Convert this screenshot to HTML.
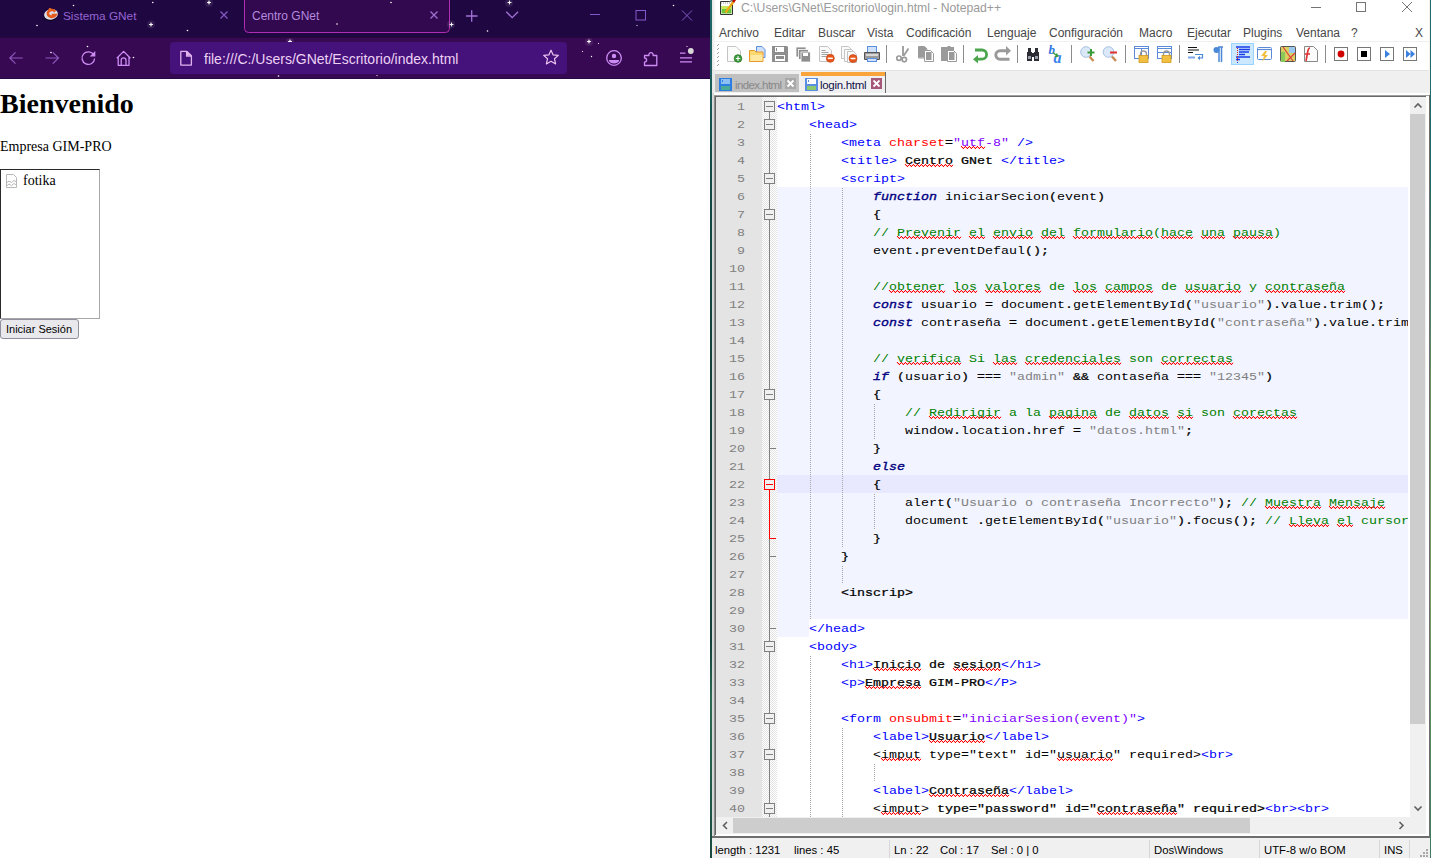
<!DOCTYPE html>
<html><head><meta charset="utf-8"><title>Screen</title>
<style>
*{margin:0;padding:0;box-sizing:border-box}
html,body{width:1431px;height:858px;overflow:hidden;background:#fff;position:relative;font-family:"Liberation Sans",sans-serif}
.ab{position:absolute}
/* firefox */
#ff{position:absolute;left:0;top:0;width:710px;height:858px;background:#fff;overflow:hidden}
#fftabs{position:absolute;left:0;top:0;width:710px;height:37px;background:#1f0741}
#fftool{position:absolute;left:0;top:37px;width:710px;height:42px;background:#380953;border-top:1px solid #2a063f}
.fft{position:absolute;font-size:12px;white-space:nowrap;line-height:14px}
/* notepad++ */
#npp{position:absolute;left:712px;top:0;width:719px;height:858px;background:#f0f0f0;overflow:hidden}
.menu{position:absolute;top:26px;font-size:12px;line-height:14px;color:#474747;white-space:nowrap}
.ln{position:absolute;left:777px;height:18px;font-family:"Liberation Mono",monospace;font-size:13.333px;line-height:18px;white-space:pre;color:#000;transform:scaleY(0.86);transform-origin:0 12.5px}
.lno{position:absolute;left:0;width:745px;text-align:right;height:18px;font-family:"Liberation Mono",monospace;font-size:13.333px;line-height:18px;color:#808080;transform:scaleY(0.88);transform-origin:0 12.5px}
.t{color:#0000ff}
.a{color:#ff0000}
.v{color:#8000ff}
.b{font-weight:normal;-webkit-text-stroke:0.28px #000}
.k{color:#000080;font-weight:normal;font-style:italic;-webkit-text-stroke:0.4px #000080}
.c{color:#008000}
.s{color:#808080}
.sb{position:absolute;top:843px;font-size:11.3px;line-height:14px;color:#000;white-space:nowrap}

</style></head><body>
<div id="ff">
 <div id="fftabs"></div>
 <div id="fftool"></div>
 <div class="ab" style="left:0;top:78px;width:710px;height:1px;background:#2a0642"></div>
 <svg class="ab" style="left:0;top:0" width="710" height="79" viewBox="0 0 710 79">
  <!-- selected tab -->
  <path d="M244.5,-2 V28.5 A4,4 0 0 0 248.5,32.5 H445.5 A4,4 0 0 0 449.5,28.5 V-2" fill="#32094e" stroke="#b02cb0" stroke-width="1"/>
  <!-- favicon -->
  <ellipse cx="50.5" cy="15.8" rx="6.8" ry="5" fill="#000" opacity=".55" transform="rotate(-15 50.5 15.8)"/>
  <ellipse cx="51" cy="14.4" rx="7" ry="5.3" fill="#dcdce6" transform="rotate(-12 51 14.4)"/>
  <path d="M55.2,11.6 A4,3.4 0 1 0 55.4,15 H51.6" fill="none" stroke="#e4581a" stroke-width="2.6"/>
  <circle cx="50" cy="9.5" r="1.4" fill="#e86a20"/>
  <!-- tab close 1 -->
  <path d="M220.5,11.5 l7,7 M227.5,11.5 l-7,7" stroke="#8458c0" stroke-width="1.3"/>
  <!-- tab close 2 -->
  <path d="M430.5,11.5 l7,7 M437.5,11.5 l-7,7" stroke="#a070d0" stroke-width="1.3"/>
  <!-- plus -->
  <path d="M466,16 h11.5 M471.7,10.3 v11.5" stroke="#a373d8" stroke-width="1.3"/>
  <!-- chevron -->
  <path d="M506.3,11.8 l5.9,5.9 l5.9,-5.9" fill="none" stroke="#a373d8" stroke-width="1.3"/>
  <!-- window controls -->
  <path d="M590,14.5 h10" stroke="#8458c8" stroke-width="1"/>
  <rect x="636" y="10.5" width="9.5" height="9.5" fill="none" stroke="#8458c8" stroke-width="1"/>
  <path d="M682,10.5 l10,10 M692,10.5 l-10,10" stroke="#8458c8" stroke-width="1"/>
  <!-- stars -->
  <g fill="#fff">
   <circle cx="73.5" cy="5.5" r=".8"/><circle cx="37" cy="25.5" r=".8"/><circle cx="152.8" cy="2.5" r=".8"/>
   <circle cx="151" cy="24.5" r="1"/><circle cx="187.5" cy="30.5" r=".8"/><circle cx="209" cy="2.5" r="1"/>
   <circle cx="337" cy="24" r=".8"/><circle cx="391" cy="2.5" r=".8"/><circle cx="451.5" cy="24.5" r="1"/>
   <circle cx="487.5" cy="31" r=".8"/><circle cx="509.5" cy="2.5" r="1"/><circle cx="673.5" cy="5.5" r=".8"/>
   <circle cx="637" cy="25.5" r=".6"/>
   <circle cx="87.5" cy="46.5" r=".8"/><circle cx="51" cy="52.5" r=".8"/><circle cx="133.5" cy="57.5" r=".8"/>
   <circle cx="202.5" cy="70.5" r="1"/><circle cx="290" cy="41.5" r="1"/><circle cx="278.5" cy="76" r=".8"/>
   <circle cx="282" cy="51.5" r=".6"/><circle cx="298" cy="42.5" r=".6"/><circle cx="312" cy="68.5" r=".8"/>
   <circle cx="589" cy="41.5" r="1"/><circle cx="598.5" cy="43.5" r=".6"/><circle cx="582.5" cy="51.5" r=".6"/>
   <circle cx="591.5" cy="56.5" r=".7"/><circle cx="687" cy="46.5" r=".6"/><circle cx="377" cy="75.5" r=".6"/>
  </g>
  <g fill="#ffffff" opacity=".08"><circle cx="151" cy="24.5" r="4"/><circle cx="209" cy="3" r="4"/><circle cx="451" cy="24.5" r="4"/><circle cx="509" cy="3" r="4"/><circle cx="290" cy="42" r="4"/><circle cx="589" cy="42" r="4"/></g>
  <path d="M149,24.5 h4 M151,22.5 v4" stroke="#fff" stroke-width=".9" fill="none"/><path d="M207,2.5 h4 M209,0.5 v4" stroke="#fff" stroke-width=".9" fill="none"/><path d="M288,41.5 h4 M290,39.5 v4" stroke="#fff" stroke-width=".9" fill="none"/><path d="M200.5,70.5 h4 M202.5,68.5 v4" stroke="#fff" stroke-width=".9" fill="none"/><path d="M449.5,24.5 h4 M451.5,22.5 v4" stroke="#fff" stroke-width=".9" fill="none"/><path d="M507.5,2.5 h4 M509.5,0.5 v4" stroke="#fff" stroke-width=".9" fill="none"/><path d="M587,41.5 h4 M589,39.5 v4" stroke="#fff" stroke-width=".9" fill="none"/>
  <!-- toolbar icons -->
  <path d="M9.8,58 h13 M15.5,52.3 L9.8,58 L15.5,63.7" fill="none" stroke="#8b58bd" stroke-width="1.2"/>
  <path d="M45.5,58 h13 M52.8,52.3 L58.5,58 L52.8,63.7" fill="none" stroke="#8b58bd" stroke-width="1.2"/>
  <path d="M93.8,55 A6.3,6.3 0 1 0 94.6,58.5" fill="none" stroke="#cc8cf4" stroke-width="1.3"/>
  <path d="M95.3,51 V56.6 H89.7 Z" fill="#cc8cf4"/>
  <path d="M116.8,58.2 L123.6,51.4 L130.4,58.2 M118.2,57 V65.3 H129 V57 M121.2,65.3 V60.2 A2.4,2.4 0 0 1 126,60.2 V65.3" fill="none" stroke="#cc8cf4" stroke-width="1.3" stroke-linejoin="round"/>
  <!-- url bar -->
  <rect x="170" y="42" width="397" height="32" rx="4" fill="#45117a"/>
  <path d="M180.8,51.4 h6.2 l4.4,4.4 v9.3 h-10.6 z M186.6,51.6 v4.6 h4.6" fill="none" stroke="#e2b2ee" stroke-width="1.3" stroke-linejoin="round"/>
  <path d="M187,51.5 l4.3,4.3 h-4.3 z" fill="#e2b2ee"/>
  <path d="M551,50.2 L553.2,54.9 L558.3,55.4 L554.5,58.8 L555.6,63.9 L551,61.3 L546.4,63.9 L547.5,58.8 L543.7,55.4 L548.8,54.9 Z" fill="none" stroke="#eec6f2" stroke-width="1.2" stroke-linejoin="round"/>
  <circle cx="614" cy="58" r="7.3" fill="none" stroke="#cc8cf4" stroke-width="1.3"/>
  <circle cx="614" cy="56" r="2.2" fill="#cc8cf4"/>
  <path d="M608.8,60 h10.4 a5.2,3.6 0 0 1 -10.4,0 z" fill="#cc8cf4"/>
  <path d="M644.5,65.5 V62.2 a2.1,2.1 0 0 0 0,-4.2 V55.5 H648.9 a2.2,2.2 0 1 1 4.2,0 H656.8 V65.5 Z" fill="none" stroke="#cc8cf4" stroke-width="1.3" stroke-linejoin="round"/>
  <path d="M680,53.2 h5.5 M680,57.8 h12 M680,61.8 h12" stroke="#cc8cf4" stroke-width="1.3"/>
  <circle cx="690.8" cy="51" r="2.9" fill="#d8d8d8"/>
 </svg>
 <div class="fft" style="left:63px;top:9px;color:#9566d2;font-size:11.8px">Sistema GNet</div>
 <div class="fft" style="left:252px;top:9px;color:#b48adf">Centro GNet</div>
 <div class="fft" style="left:204px;top:51px;color:#ecd2f4;font-size:14px;line-height:16px">file:///C:/Users/GNet/Escritorio/index.html</div>
 <!-- page -->
 <div class="ab" style="left:0;top:92px;font-family:'Liberation Serif',serif;font-weight:bold;font-size:28px;line-height:24px;color:#000;white-space:nowrap">Bienvenido</div>
 <div class="ab" style="left:0;top:140px;font-family:'Liberation Serif',serif;font-size:14px;line-height:14px;color:#000;white-space:nowrap">Empresa GIM-PRO</div>
 <div class="ab" style="left:0;top:169px;width:100px;height:150px;border:1px solid;border-color:#2a2a2a #a8a8a8 #a8a8a8 #2a2a2a"></div>
 <svg class="ab" style="left:0;top:160px" width="30" height="40" viewBox="0 160 30 40">
  <path d="M6.5,174.5 h7 l3,3 v10 h-10 z" fill="#fff" stroke="#b8b8b8"/>
  <path d="M6.5,183 l2.5,-2 l2.5,1.5 l2.5,-2 l2.5,1.5 M6.5,186 l2.5,-2 l2.5,1.5 l2.5,-2 l2.5,1.5" fill="none" stroke="#b8b8b8"/>
 </svg>
 <div class="ab" style="left:23px;top:174px;font-family:'Liberation Serif',serif;font-size:14px;line-height:14px;color:#000">fotika</div>
 <div class="ab" style="left:0;top:319px;width:79px;height:20px;border:1px solid #8f8f9d;border-radius:3px;background:#e9e9ed"></div>
 <div class="ab" style="left:6px;top:323px;font-size:11px;line-height:12px;color:#000;white-space:nowrap">Iniciar Sesión</div>
</div>
<div class="ab" style="left:710px;top:0;width:2px;height:858px;background:linear-gradient(to bottom,#206a6a 0,#1d6262 60px,#154a46 160px,#133f3c 400px,#133f3c 640px,#2d6a52 700px,#1a4a40 858px)"></div>

<div id="npp"></div>
<!-- title + menu + toolbar white area -->
<div class="ab" style="left:712px;top:0;width:717px;height:70px;background:#fff"></div>
<div class="ab" style="left:712px;top:0;width:4px;height:858px;background:linear-gradient(to right,#e6e6e6,#fff0)"></div>
<div class="ab" style="left:712px;top:41px;width:717px;height:1px;background:#f0f0f0"></div>
<div class="ab" style="left:712px;top:70px;width:717px;height:1px;background:#e3e3e3"></div>
<svg class="ab" style="left:712px;top:0" width="719" height="72" viewBox="712 0 719 72">
 <!-- app icon -->
 <path d="M720.5,1.5 h9 l3,-1 v14 h-12 z" fill="#fff" stroke="#333" stroke-width="1"/>
 <path d="M721,3 h11" stroke="#999" stroke-dasharray="1 1"/>
 <rect x="721.5" y="6" width="10" height="7.5" fill="#6cc83a"/>
 <rect x="721.5" y="6" width="10" height="3" fill="#c8e858"/>
 <path d="M725.5,12.5 L734,1" stroke="#f0a818" stroke-width="2.2"/>
 <path d="M733.2,2 L735,-0.5" stroke="#b00" stroke-width="2.2"/>
 <!-- window controls -->
 <path d="M1311,7.5 h10" stroke="#747474" stroke-width="1"/>
 <rect x="1356.5" y="2.5" width="9" height="9" fill="none" stroke="#747474" stroke-width="1"/>
 <path d="M1402,2 l10,10 M1412,2 l-10,10" stroke="#747474" stroke-width="1"/>
 <!-- grip -->
 <g fill="#a0a0a0"><rect x="717" y="45" width="1" height="1"/><rect x="717" y="49" width="1" height="1"/><rect x="717" y="53" width="1" height="1"/><rect x="717" y="57" width="1" height="1"/><rect x="717" y="61" width="1" height="1"/><rect x="717" y="65" width="1" height="1"/>
 <rect x="718" y="44" width="1" height="1"/><rect x="718" y="48" width="1" height="1"/><rect x="718" y="52" width="1" height="1"/><rect x="718" y="56" width="1" height="1"/><rect x="718" y="60" width="1" height="1"/><rect x="718" y="64" width="1" height="1"/></g>
 <!-- separators -->
 <g fill="#8c8c8c"><rect x="886" y="45" width="1" height="18"/><rect x="963" y="45" width="1" height="18"/><rect x="1017" y="45" width="1" height="18"/><rect x="1071" y="45" width="1" height="18"/><rect x="1125" y="45" width="1" height="18"/><rect x="1179" y="45" width="1" height="18"/><rect x="1325" y="45" width="1" height="18"/></g>
 <!-- 1 new -->
 <path d="M727.5,46.5 h8.5 l4.5,4.5 v10.5 h-13 z" fill="#fbfbfb" stroke="#c4c4c4"/>
 <circle cx="738" cy="58.5" r="3.8" fill="#3c9c3c" stroke="#2a7a2a" stroke-width=".8"/>
 <path d="M738,56.3 v4.4 M735.8,58.5 h4.4" stroke="#fff" stroke-width="1.2"/>
 <!-- 2 open -->
 <path d="M756.5,46.5 h5.5 l3,3 v8 h-8.5 z" fill="#cfe0fa" stroke="#5b8fde"/>
 <path d="M749.5,50.5 h5 l1.5,1.5 h7 v9.5 h-13.5 z" fill="#ffd870" stroke="#e8962e"/>
 <rect x="750.5" y="55" width="12" height="6" fill="#ffe9a0"/>
 <!-- 3 save -->
 <path d="M772,46 h15 l1,1 v15 h-16 z" fill="#8e8e8e"/>
 <rect x="775" y="47" width="9" height="5" fill="#fff"/><rect x="776" y="48" width="1" height="3" fill="#8e8e8e"/>
 <rect x="775" y="55" width="10" height="6" fill="#fff"/><rect x="776" y="56" width="8" height="3" fill="#8e8e8e"/>
 <!-- 4 save all -->
 <rect x="796" y="47" width="10" height="10" fill="#8e8e8e" stroke="#fff" stroke-width=".8"/>
 <rect x="798.5" y="49.5" width="10" height="10" fill="#8e8e8e" stroke="#fff" stroke-width=".8"/>
 <rect x="801" y="52" width="9.5" height="10" fill="#8e8e8e" stroke="#fff" stroke-width=".8"/>
 <rect x="803" y="53" width="5" height="3" fill="#fff"/>
 <!-- 5 close -->
 <path d="M819.5,46.5 h8 l4,4 v11 h-12 z" fill="#fafafa" stroke="#c4c4c4"/>
 <path d="M821.5,50.5 h4 M821.5,52.5 h7 M821.5,54.5 h7 M821.5,56.5 h5" stroke="#8a8a8a" stroke-width=".8"/>
 <circle cx="830.3" cy="58.3" r="4" fill="#e8561a" stroke="#c04010" stroke-width=".6"/>
 <path d="M827.8,58.3 h5" stroke="#fff" stroke-width="1.5"/>
 <!-- 6 close all -->
 <path d="M841.5,46.5 h7 l3,3 v9 h-10 z" fill="#fafafa" stroke="#c4c4c4"/>
 <path d="M844.5,49.5 h7 l3,3 v9 h-10 z" fill="#fafafa" stroke="#c4c4c4"/>
 <path d="M847.5,51.5 h6 l3,3 v8 h-9 z" fill="#fafafa" stroke="#c4c4c4"/>
 <circle cx="853" cy="58.5" r="4" fill="#e8561a" stroke="#c04010" stroke-width=".6"/>
 <path d="M850.5,58.5 h5" stroke="#fff" stroke-width="1.5"/>
 <!-- 7 print -->
 <rect x="867.5" y="46.5" width="9" height="6" fill="#cfe0fa" stroke="#5b8fde"/>
 <path d="M864.5,52.5 h15 v7 h-15 z" fill="#9a9a9a" stroke="#555"/>
 <rect x="866" y="54" width="12" height="2" fill="#d8d8d8"/>
 <rect x="867.5" y="58.5" width="9" height="3" fill="#cfe0fa" stroke="#5b8fde"/>
 <!-- 8 cut -->
 <path d="M903,46 V56 M908.5,48.5 L903.5,56" stroke="#9a9a9a" stroke-width="1.8"/>
 <circle cx="899" cy="58.2" r="2.2" fill="none" stroke="#9a9a9a" stroke-width="1.7"/>
 <circle cx="904.3" cy="59.6" r="2.2" fill="none" stroke="#9a9a9a" stroke-width="1.7"/>
 <!-- 9 copy -->
 <path d="M918.5,46.5 h6 l2.5,2.5 v9 h-8.5 z" fill="#9a9a9a" stroke="#fff" stroke-width="1"/>
 <path d="M918.5,46.5 h6 l2.5,2.5 v9 h-8.5 z" fill="none" stroke="#9a9a9a" stroke-width="1" transform="translate(0,0)"/>
 <rect x="920" y="48" width="5" height="8.5" fill="#9a9a9a"/>
 <path d="M924.5,50.5 h6 l3,3 v8 h-9 z" fill="#fff" stroke="#9a9a9a"/>
 <rect x="926" y="52" width="5.5" height="8" fill="#9a9a9a"/>
 <!-- 10 paste -->
 <path d="M941,47 h6 l1,-1 h2 l1,1 h3 v14 h-13 z" fill="#9a9a9a"/>
 <path d="M947.5,50.5 h6 l3,3 v8 h-9 z" fill="#fff" stroke="#9a9a9a"/>
 <rect x="949" y="52" width="5.5" height="8" fill="#9a9a9a"/>
 <!-- 11 undo -->
 <path d="M975,50 h7 a4.6,4.6 0 0 1 0,9.2 h-4" fill="none" stroke="#4da64d" stroke-width="2.8"/>
 <path d="M973,59.2 l5,-4.3 v8.6 z" fill="#4da64d"/>
 <!-- 12 redo -->
 <path d="M1006,50.8 h-6 a4.2,4.2 0 0 0 0,8.4 h9.5" fill="none" stroke="#9a9a9a" stroke-width="3"/>
 <path d="M1011,50.8 l-5,-4.8 v9.6 z" fill="#9a9a9a"/>
 <!-- 13 find -->
 <path d="M1027,52 h5 v9 h-5 z M1034,52 h5 v9 h-5 z M1028,48 h3 v4 h-3 z M1035,48 h3 v4 h-3 z M1031,53 h4 v4 h-4 z" fill="#2c2c34"/>
 <rect x="1028" y="56" width="3" height="3" fill="#9aa0a8"/><rect x="1035" y="56" width="3" height="3" fill="#9aa0a8"/>
 <!-- 14 replace -->
 <text x="1048.5" y="54" font-family="Liberation Serif" font-style="italic" font-weight="bold" font-size="13" fill="#2f78e0">b</text>
 <text x="1053.5" y="62.5" font-family="Liberation Serif" font-style="italic" font-weight="bold" font-size="16" fill="#3a84e8">a</text>
 <path d="M1053,52.5 l4,3.5 M1056.5,53.5 l1.2,2.8 l-3,0.3" fill="none" stroke="#3a9a3a" stroke-width="1.3"/>
 <!-- 15 zoom in -->
 <circle cx="1086" cy="52" r="5.3" fill="#dbe8f8" stroke="#a8c0e0"/>
 <path d="M1089.5,56.5 l4,4.5" stroke="#c88a50" stroke-width="2.4"/>
 <path d="M1091,49 v7 M1087.5,52.5 h7" stroke="#3a9a3a" stroke-width="2"/>
 <!-- 16 zoom out -->
 <circle cx="1108.5" cy="52" r="5.3" fill="#dbe8f8" stroke="#a8c0e0"/>
 <path d="M1112,56.5 l4,4.5" stroke="#c88a50" stroke-width="2.4"/>
 <path d="M1110,52.5 h7" stroke="#e03030" stroke-width="2"/>
 <!-- 17 sync v -->
 <rect x="1134.5" y="46.5" width="14" height="12" fill="#fff" stroke="#5a8ad8"/>
 <path d="M1134.5,48.5 h14 M1141.5,48.5 v10" stroke="#5a8ad8"/>
 <path d="M1140.5,56 v-2 a3,3 0 0 1 6,0 v2" fill="none" stroke="#999" stroke-width="1.4"/>
 <rect x="1139" y="55.5" width="9" height="7" fill="#f2c040" stroke="#d09a20" stroke-width=".8"/>
 <!-- 18 sync h -->
 <rect x="1157.5" y="46.5" width="14" height="12" fill="#fff" stroke="#5a8ad8"/>
 <path d="M1157.5,48.5 h14 M1157.5,52.5 h14" stroke="#5a8ad8"/>
 <path d="M1163.5,56 v-2 a3,3 0 0 1 6,0 v2" fill="none" stroke="#999" stroke-width="1.4"/>
 <rect x="1162" y="55.5" width="9" height="7" fill="#f2c040" stroke="#d09a20" stroke-width=".8"/>
 <!-- 19 wrap -->
 <path d="M1188,47.5 h9 M1188,50 h11 M1188,52.5 h5" stroke="#111" stroke-width="1"/>
 <path d="M1195,54.5 h7.5 v3.5 h-4" fill="none" stroke="#4a88d8" stroke-width="1.2"/>
 <path d="M1197.5,58 l2.5,-2.3 v4.6 z" fill="#4a88d8"/>
 <rect x="1188" y="56.5" width="7" height="2" fill="#7aa8e8"/>
 <!-- 20 pilcrow -->
 <path d="M1218,47 h5 M1219,47 v15 M1221.5,47 v15" stroke="#4a88d8" stroke-width="1.5"/>
 <circle cx="1216.5" cy="50" r="3" fill="#4a88d8"/>
 <!-- 21 indent guide (active) -->
 <rect x="1231.5" y="43.5" width="22" height="21" fill="#cce8ff" stroke="#99d1ff"/>
 <path d="M1236,47 h14 M1239,49.5 h11 M1239,52 h10 M1239,54.5 h6 M1236,57 h14 M1236,59.5 h4" stroke="#1a3ce8" stroke-width="1.3"/>
 <path d="M1237.5,48 v13" stroke="#e02020" stroke-dasharray="1 1"/>
 <rect x="1237" y="62" width="1" height="1" fill="#1a3ce8"/>
 <!-- 22 lang -->
 <rect x="1257.5" y="47.5" width="14" height="12" rx="1" fill="#fff" stroke="#5a8ad8"/>
 <path d="M1257.5,49.5 h14" stroke="#5a8ad8" stroke-width="1.2"/>
 <path d="M1265,51 l-4,5 h3 l-2,6 l6,-7 h-3 l2,-4 z" fill="#f0c040"/>
 <!-- 23 doc map -->
 <rect x="1280.5" y="46.5" width="15" height="15" rx="1" fill="#d8d060" stroke="#555"/>
 <path d="M1281,52 h4 v10 h-4 z" fill="#8ac858"/><path d="M1289,47 h6 v6 h-6 z" fill="#9ac8f0"/>
 <path d="M1283,47 l10,14 M1295,53 l-8,8" stroke="#e04040" stroke-width="1.2"/>
 <!-- 24 function list -->
 <path d="M1304.5,46.5 h9 l4,4 v11 h-13 z" fill="#fbfbfb" stroke="#888"/>
 <path d="M1310,48 c-2,0 -2,2 -2.5,5 l-1.5,8 M1305,54 h5" fill="none" stroke="#e03030" stroke-width="1.6"/>
 <!-- 25 record -->
 <rect x="1334.5" y="47.5" width="13" height="13" fill="#fff" stroke="#777"/>
 <circle cx="1341" cy="54" r="3.4" fill="#d00000"/>
 <!-- 26 stop -->
 <rect x="1357.5" y="47.5" width="13" height="13" fill="#fff" stroke="#777"/>
 <rect x="1361" y="51" width="6" height="6" fill="#000"/>
 <!-- 27 play -->
 <rect x="1380.5" y="47.5" width="13" height="13" fill="#fff" stroke="#777"/>
 <path d="M1385,50 l5,4 l-5,4 z" fill="#3a80e0"/>
 <!-- 28 play multi -->
 <rect x="1403.5" y="47.5" width="13" height="13" fill="#fff" stroke="#777"/>
 <path d="M1406,50 l4.5,4 l-4.5,4 z M1410.5,50 l4.5,4 l-4.5,4 z" fill="#3a80e0"/>
</svg>
<div class="ab" style="left:741px;top:1px;font-size:12.2px;line-height:14px;color:#9a9a9a;white-space:nowrap">C:\Users\GNet\Escritorio\login.html - Notepad++</div>
<div class="menu" style="left:719px">Archivo</div>
<div class="menu" style="left:774px">Editar</div>
<div class="menu" style="left:818px">Buscar</div>
<div class="menu" style="left:867px">Vista</div>
<div class="menu" style="left:906px">Codificación</div>
<div class="menu" style="left:987px">Lenguaje</div>
<div class="menu" style="left:1049px">Configuración</div>
<div class="menu" style="left:1139px">Macro</div>
<div class="menu" style="left:1187px">Ejecutar</div>
<div class="menu" style="left:1243px">Plugins</div>
<div class="menu" style="left:1296px">Ventana</div>
<div class="menu" style="left:1351px">?</div>
<div class="menu" style="left:1415px">X</div>
<!-- tabs -->
<div class="ab" style="left:715px;top:74px;width:84px;height:18px;background:#c0c0c0"></div>
<div class="ab" style="left:801px;top:72px;width:85px;height:22px;background:#f0f0f0;border-right:1px solid #6a6a6a"></div>
<div class="ab" style="left:801px;top:72px;width:84px;height:4px;background:#faa53c"></div>
<svg class="ab" style="left:712px;top:70px" width="200" height="26" viewBox="712 70 200 26">
 <rect x="719" y="78" width="13" height="13" fill="#2e7de0"/><rect x="721" y="79" width="9" height="5" fill="#8cc0f4"/><rect x="721" y="86" width="9" height="4" fill="#4aaa98"/><rect x="722" y="80" width="1" height="2" fill="#2e7de0"/>
 <rect x="785" y="78" width="11" height="11" fill="#a8a8a8"/><path d="M787.5,80.5 l6,6 M793.5,80.5 l-6,6" stroke="#fff" stroke-width="1.8"/>
 <rect x="805" y="78" width="13" height="13" fill="#5a8ee0"/><rect x="807" y="79" width="9" height="5" fill="#fff"/><rect x="807" y="86" width="9" height="4" fill="#8cc870"/><rect x="808" y="80" width="1" height="2" fill="#5a8ee0"/>
 <rect x="871" y="78" width="11" height="11" fill="#a55878"/><path d="M873.5,80.5 l6,6 M879.5,80.5 l-6,6" stroke="#fff" stroke-width="1.8"/>
</svg>
<div class="ab" style="left:735px;top:78px;font-size:11.5px;line-height:14px;color:#888;white-space:nowrap;letter-spacing:-0.6px">index.html</div>
<div class="ab" style="left:820px;top:78px;font-size:11.5px;line-height:14px;color:#10104a;white-space:nowrap;letter-spacing:-0.3px">login.html</div>
<!-- editor frame -->
<div class="ab" style="left:713px;top:93px;width:716px;height:744px;background:#fff"></div>
<div class="ab" style="left:712px;top:93px;width:1px;height:745px;background:#dadada"></div>
<div class="ab" style="left:713px;top:93px;width:1px;height:743px;background:#d2d2d2"></div>
<div class="ab" style="left:714px;top:95px;width:1px;height:741px;background:#8f8f8f"></div>
<div class="ab" style="left:714px;top:95px;width:715px;height:1px;background:#a0a0a0"></div>
<div class="ab" style="left:715px;top:96px;width:1px;height:739px;background:#636363"></div>
<div class="ab" style="left:715px;top:96px;width:712px;height:1px;background:#696969"></div>
<div class="ab" style="left:712px;top:836px;width:718px;height:2px;background:#6e6e6e"></div>
<div class="ab" style="left:1429px;top:95px;width:1px;height:743px;background:#6e6e6e"></div>
<div class="ab" style="left:716px;top:97px;width:46px;height:720px;background:#e4e4e4"></div>
<svg class="ab" style="left:762px;top:97px" width="15" height="720" viewBox="762 97 15 720">
 <defs><pattern id="chk" x="0" y="0" width="2" height="2" patternUnits="userSpaceOnUse"><rect width="2" height="2" fill="#fff"/><rect width="1" height="1" fill="#e4e4e4"/><rect x="1" y="1" width="1" height="1" fill="#e4e4e4"/></pattern></defs>
 <rect x="762" y="97" width="15" height="720" fill="url(#chk)"/>
 <rect x="769" y="112" width="1" height="705" fill="#808080"/>
<rect x="769" y="490" width="1" height="49" fill="#ff0000"/>
<rect x="770" y="538" width="6" height="1" fill="#ff0000"/>
<rect x="770" y="448" width="6" height="1" fill="#808080"/>
<rect x="770" y="556" width="6" height="1" fill="#808080"/>
<rect x="770" y="628" width="6" height="1" fill="#808080"/>
<rect x="764.5" y="101.5" width="10" height="10" fill="#f0f0f0" stroke="#808080"/>
<rect x="766" y="106" width="7" height="1" fill="#808080"/>
<rect x="764.5" y="119.5" width="10" height="10" fill="#f0f0f0" stroke="#808080"/>
<rect x="766" y="124" width="7" height="1" fill="#808080"/>
<rect x="764.5" y="173.5" width="10" height="10" fill="#f0f0f0" stroke="#808080"/>
<rect x="766" y="178" width="7" height="1" fill="#808080"/>
<rect x="764.5" y="209.5" width="10" height="10" fill="#f0f0f0" stroke="#808080"/>
<rect x="766" y="214" width="7" height="1" fill="#808080"/>
<rect x="764.5" y="389.5" width="10" height="10" fill="#f0f0f0" stroke="#808080"/>
<rect x="766" y="394" width="7" height="1" fill="#808080"/>
<rect x="764.5" y="479.5" width="10" height="10" fill="#f0f0f0" stroke="#ff0000"/>
<rect x="766" y="484" width="7" height="1" fill="#ff0000"/>
<rect x="764.5" y="641.5" width="10" height="10" fill="#f0f0f0" stroke="#808080"/>
<rect x="766" y="646" width="7" height="1" fill="#808080"/>
<rect x="764.5" y="713.5" width="10" height="10" fill="#f0f0f0" stroke="#808080"/>
<rect x="766" y="718" width="7" height="1" fill="#808080"/>
<rect x="764.5" y="749.5" width="10" height="10" fill="#f0f0f0" stroke="#808080"/>
<rect x="766" y="754" width="7" height="1" fill="#808080"/>
<rect x="764.5" y="803.5" width="10" height="10" fill="#f0f0f0" stroke="#808080"/>
<rect x="766" y="808" width="7" height="1" fill="#808080"/>
</svg>
<div class="ab" style="left:777px;top:97px;width:631px;height:720px;overflow:hidden">
 <div class="ab" style="left:0;top:90px;width:633px;height:432px;background:#f2f4ff"></div>
 <div class="ab" style="left:0;top:378px;width:633px;height:18px;background:#e8e8ff"></div>
 <div class="ab" style="left:0;top:522px;width:32px;height:18px;background:#f2f4ff"></div>
 <svg class="ab" style="left:0;top:0" width="633" height="720" viewBox="777 97 633 720">
  <defs><pattern id="dots" x="0" y="0" width="1" height="2" patternUnits="userSpaceOnUse"><rect width="1" height="1" fill="#a8a8a8"/></pattern></defs>
<rect x="810" y="133" width="1" height="486" fill="url(#dots)"/>
<rect x="810" y="655" width="1" height="162" fill="url(#dots)"/>
<rect x="842" y="187" width="1" height="360" fill="url(#dots)"/>
<rect x="842" y="565" width="1" height="18" fill="url(#dots)"/>
<rect x="842" y="727" width="1" height="90" fill="url(#dots)"/>
<rect x="874" y="403" width="1" height="36" fill="url(#dots)"/>
<rect x="874" y="493" width="1" height="36" fill="url(#dots)"/>
<rect x="874" y="763" width="1" height="18" fill="url(#dots)"/>
 </svg>
 <div class="ab" style="left:-777px;top:-97px;width:1431px;height:858px">
<div class="ln" style="top:98px"><span class="t">&lt;html&gt;</span></div>
<div class="ln" style="top:116px">    <span class="t">&lt;head&gt;</span></div>
<div class="ln" style="top:134px">        <span class="t">&lt;meta </span><span class="a">charset</span><span class="b">=</span><span class="v">"utf-8"</span><span class="t"> /&gt;</span></div>
<div class="ln" style="top:152px">        <span class="t">&lt;title&gt;</span><span class="b"> Centro GNet </span><span class="t">&lt;/title&gt;</span></div>
<div class="ln" style="top:170px">        <span class="t">&lt;script&gt;</span></div>
<div class="ln" style="top:188px">            <span class="k">function</span> iniciarSecion<span class="b">(</span>event<span class="b">)</span></div>
<div class="ln" style="top:206px">            <span class="b">{</span></div>
<div class="ln" style="top:224px">            <span class="c">// Prevenir el envio del formulario(hace una pausa)</span></div>
<div class="ln" style="top:242px">            event<span class="b">.</span>preventDefaul<span class="b">();</span></div>
<div class="ln" style="top:260px"></div>
<div class="ln" style="top:278px">            <span class="c">//obtener los valores de los campos de usuario y contraseña</span></div>
<div class="ln" style="top:296px">            <span class="k">const</span> usuario <span class="b">=</span> document<span class="b">.</span>getElementById<span class="b">(</span><span class="s">"usuario"</span><span class="b">).</span>value<span class="b">.</span>trim<span class="b">();</span></div>
<div class="ln" style="top:314px">            <span class="k">const</span> contraseña <span class="b">=</span> document<span class="b">.</span>getElementById<span class="b">(</span><span class="s">"contraseña"</span><span class="b">).</span>value<span class="b">.</span>trim<span class="b">();</span></div>
<div class="ln" style="top:332px"></div>
<div class="ln" style="top:350px">            <span class="c">// verifica Si las credenciales son correctas</span></div>
<div class="ln" style="top:368px">            <span class="k">if</span> <span class="b">(</span>usuario<span class="b">)</span> <span class="b">===</span> <span class="s">"admin"</span> <span class="b">&amp;&amp;</span> contaseña <span class="b">===</span> <span class="s">"12345"</span><span class="b">)</span></div>
<div class="ln" style="top:386px">            <span class="b">{</span></div>
<div class="ln" style="top:404px">                <span class="c">// Redirigir a la pagina de datos si son corectas</span></div>
<div class="ln" style="top:422px">                window<span class="b">.</span>location<span class="b">.</span>href <span class="b">=</span> <span class="s">"datos.html"</span><span class="b">;</span></div>
<div class="ln" style="top:440px">            <span class="b">}</span></div>
<div class="ln" style="top:458px">            <span class="k">else</span></div>
<div class="ln" style="top:476px">            <span class="b">{</span></div>
<div class="ln" style="top:494px">                alert<span class="b">(</span><span class="s">"Usuario o contraseña Incorrecto"</span><span class="b">);</span> <span class="c">// Muestra Mensaje</span></div>
<div class="ln" style="top:512px">                document <span class="b">.</span>getElementById<span class="b">(</span><span class="s">"usuario"</span><span class="b">).</span>focus<span class="b">();</span> <span class="c">// Lleva el cursor al campo</span></div>
<div class="ln" style="top:530px">            <span class="b">}</span></div>
<div class="ln" style="top:548px">        <span class="b">}</span></div>
<div class="ln" style="top:566px"></div>
<div class="ln" style="top:584px">        <span class="b">&lt;inscrip&gt;</span></div>
<div class="ln" style="top:602px"></div>
<div class="ln" style="top:620px">    <span class="t">&lt;/head&gt;</span></div>
<div class="ln" style="top:638px">    <span class="t">&lt;body&gt;</span></div>
<div class="ln" style="top:656px">        <span class="t">&lt;h1&gt;</span><span class="b">Inicio de sesion</span><span class="t">&lt;/h1&gt;</span></div>
<div class="ln" style="top:674px">        <span class="t">&lt;p&gt;</span><span class="b">Empresa GIM-PRO</span><span class="t">&lt;/P&gt;</span></div>
<div class="ln" style="top:692px"></div>
<div class="ln" style="top:710px">        <span class="t">&lt;form </span><span class="a">onsubmit</span><span class="b">=</span><span class="v">"iniciarSesion(event)"</span><span class="t">&gt;</span></div>
<div class="ln" style="top:728px">            <span class="t">&lt;label&gt;</span><span class="b">Usuario</span><span class="t">&lt;/label&gt;</span></div>
<div class="ln" style="top:746px">            &lt;imput type="text" id="usuario" required&gt;<span class="t">&lt;br&gt;</span></div>
<div class="ln" style="top:764px"></div>
<div class="ln" style="top:782px">            <span class="t">&lt;label&gt;</span><span class="b">Contraseña</span><span class="t">&lt;/label&gt;</span></div>
<div class="ln" style="top:800px">            &lt;imput&gt;<span class="b"> type="password" id="contraseña" required&gt;</span><span class="t">&lt;br&gt;&lt;br&gt;</span></div>
 </div>
 <svg class="ab" style="left:0;top:0" width="633" height="720" viewBox="777 97 633 720">
  <defs><pattern id="zz" x="777" y="2" width="4" height="3" patternUnits="userSpaceOnUse"><rect x="0" y="0" width="1" height="1" fill="#f00"/><rect x="1" y="1" width="1" height="1" fill="#f00"/><rect x="2" y="2" width="1" height="1" fill="#f00"/><rect x="3" y="1" width="1" height="1" fill="#f00"/></pattern></defs>
<polyline points="961,146.5 963,148.5 965,146.5 967,148.5 969,146.5 971,148.5 973,146.5 975,148.5 977,146.5 979,148.5 981,146.5 983,148.5 985,146.5" fill="none" stroke="#f00" stroke-width="1" opacity=".45"/>
<rect x="961" y="146" width="24" height="3" fill="url(#zz)"/>
<polyline points="905,164.5 907,166.5 909,164.5 911,166.5 913,164.5 915,166.5 917,164.5 919,166.5 921,164.5 923,166.5 925,164.5 927,166.5 929,164.5 931,166.5 933,164.5 935,166.5 937,164.5 939,166.5 941,164.5 943,166.5 945,164.5 947,166.5 949,164.5 951,166.5 953,164.5" fill="none" stroke="#f00" stroke-width="1" opacity=".45"/>
<rect x="905" y="164" width="48" height="3" fill="url(#zz)"/>
<polyline points="897,236.5 899,238.5 901,236.5 903,238.5 905,236.5 907,238.5 909,236.5 911,238.5 913,236.5 915,238.5 917,236.5 919,238.5 921,236.5 923,238.5 925,236.5 927,238.5 929,236.5 931,238.5 933,236.5 935,238.5 937,236.5 939,238.5 941,236.5 943,238.5 945,236.5 947,238.5 949,236.5 951,238.5 953,236.5 955,238.5 957,236.5 959,238.5 961,236.5" fill="none" stroke="#f00" stroke-width="1" opacity=".45"/>
<rect x="897" y="236" width="64" height="3" fill="url(#zz)"/>
<polyline points="969,236.5 971,238.5 973,236.5 975,238.5 977,236.5 979,238.5 981,236.5 983,238.5 985,236.5" fill="none" stroke="#f00" stroke-width="1" opacity=".45"/>
<rect x="969" y="236" width="16" height="3" fill="url(#zz)"/>
<polyline points="993,236.5 995,238.5 997,236.5 999,238.5 1001,236.5 1003,238.5 1005,236.5 1007,238.5 1009,236.5 1011,238.5 1013,236.5 1015,238.5 1017,236.5 1019,238.5 1021,236.5 1023,238.5 1025,236.5 1027,238.5 1029,236.5 1031,238.5 1033,236.5" fill="none" stroke="#f00" stroke-width="1" opacity=".45"/>
<rect x="993" y="236" width="40" height="3" fill="url(#zz)"/>
<polyline points="1041,236.5 1043,238.5 1045,236.5 1047,238.5 1049,236.5 1051,238.5 1053,236.5 1055,238.5 1057,236.5 1059,238.5 1061,236.5 1063,238.5 1065,236.5" fill="none" stroke="#f00" stroke-width="1" opacity=".45"/>
<rect x="1041" y="236" width="24" height="3" fill="url(#zz)"/>
<polyline points="1073,236.5 1075,238.5 1077,236.5 1079,238.5 1081,236.5 1083,238.5 1085,236.5 1087,238.5 1089,236.5 1091,238.5 1093,236.5 1095,238.5 1097,236.5 1099,238.5 1101,236.5 1103,238.5 1105,236.5 1107,238.5 1109,236.5 1111,238.5 1113,236.5 1115,238.5 1117,236.5 1119,238.5 1121,236.5 1123,238.5 1125,236.5 1127,238.5 1129,236.5 1131,238.5 1133,236.5 1135,238.5 1137,236.5 1139,238.5 1141,236.5 1143,238.5 1145,236.5 1147,238.5 1149,236.5 1151,238.5 1153,236.5" fill="none" stroke="#f00" stroke-width="1" opacity=".45"/>
<rect x="1073" y="236" width="80" height="3" fill="url(#zz)"/>
<polyline points="1161,236.5 1163,238.5 1165,236.5 1167,238.5 1169,236.5 1171,238.5 1173,236.5 1175,238.5 1177,236.5 1179,238.5 1181,236.5 1183,238.5 1185,236.5 1187,238.5 1189,236.5 1191,238.5 1193,236.5" fill="none" stroke="#f00" stroke-width="1" opacity=".45"/>
<rect x="1161" y="236" width="32" height="3" fill="url(#zz)"/>
<polyline points="1201,236.5 1203,238.5 1205,236.5 1207,238.5 1209,236.5 1211,238.5 1213,236.5 1215,238.5 1217,236.5 1219,238.5 1221,236.5 1223,238.5 1225,236.5" fill="none" stroke="#f00" stroke-width="1" opacity=".45"/>
<rect x="1201" y="236" width="24" height="3" fill="url(#zz)"/>
<polyline points="1233,236.5 1235,238.5 1237,236.5 1239,238.5 1241,236.5 1243,238.5 1245,236.5 1247,238.5 1249,236.5 1251,238.5 1253,236.5 1255,238.5 1257,236.5 1259,238.5 1261,236.5 1263,238.5 1265,236.5 1267,238.5 1269,236.5 1271,238.5 1273,236.5" fill="none" stroke="#f00" stroke-width="1" opacity=".45"/>
<rect x="1233" y="236" width="40" height="3" fill="url(#zz)"/>
<polyline points="889,290.5 891,292.5 893,290.5 895,292.5 897,290.5 899,292.5 901,290.5 903,292.5 905,290.5 907,292.5 909,290.5 911,292.5 913,290.5 915,292.5 917,290.5 919,292.5 921,290.5 923,292.5 925,290.5 927,292.5 929,290.5 931,292.5 933,290.5 935,292.5 937,290.5 939,292.5 941,290.5 943,292.5 945,290.5" fill="none" stroke="#f00" stroke-width="1" opacity=".45"/>
<rect x="889" y="290" width="56" height="3" fill="url(#zz)"/>
<polyline points="953,290.5 955,292.5 957,290.5 959,292.5 961,290.5 963,292.5 965,290.5 967,292.5 969,290.5 971,292.5 973,290.5 975,292.5 977,290.5" fill="none" stroke="#f00" stroke-width="1" opacity=".45"/>
<rect x="953" y="290" width="24" height="3" fill="url(#zz)"/>
<polyline points="985,290.5 987,292.5 989,290.5 991,292.5 993,290.5 995,292.5 997,290.5 999,292.5 1001,290.5 1003,292.5 1005,290.5 1007,292.5 1009,290.5 1011,292.5 1013,290.5 1015,292.5 1017,290.5 1019,292.5 1021,290.5 1023,292.5 1025,290.5 1027,292.5 1029,290.5 1031,292.5 1033,290.5 1035,292.5 1037,290.5 1039,292.5 1041,290.5" fill="none" stroke="#f00" stroke-width="1" opacity=".45"/>
<rect x="985" y="290" width="56" height="3" fill="url(#zz)"/>
<polyline points="1073,290.5 1075,292.5 1077,290.5 1079,292.5 1081,290.5 1083,292.5 1085,290.5 1087,292.5 1089,290.5 1091,292.5 1093,290.5 1095,292.5 1097,290.5" fill="none" stroke="#f00" stroke-width="1" opacity=".45"/>
<rect x="1073" y="290" width="24" height="3" fill="url(#zz)"/>
<polyline points="1105,290.5 1107,292.5 1109,290.5 1111,292.5 1113,290.5 1115,292.5 1117,290.5 1119,292.5 1121,290.5 1123,292.5 1125,290.5 1127,292.5 1129,290.5 1131,292.5 1133,290.5 1135,292.5 1137,290.5 1139,292.5 1141,290.5 1143,292.5 1145,290.5 1147,292.5 1149,290.5 1151,292.5 1153,290.5" fill="none" stroke="#f00" stroke-width="1" opacity=".45"/>
<rect x="1105" y="290" width="48" height="3" fill="url(#zz)"/>
<polyline points="1185,290.5 1187,292.5 1189,290.5 1191,292.5 1193,290.5 1195,292.5 1197,290.5 1199,292.5 1201,290.5 1203,292.5 1205,290.5 1207,292.5 1209,290.5 1211,292.5 1213,290.5 1215,292.5 1217,290.5 1219,292.5 1221,290.5 1223,292.5 1225,290.5 1227,292.5 1229,290.5 1231,292.5 1233,290.5 1235,292.5 1237,290.5 1239,292.5 1241,290.5" fill="none" stroke="#f00" stroke-width="1" opacity=".45"/>
<rect x="1185" y="290" width="56" height="3" fill="url(#zz)"/>
<polyline points="1265,290.5 1267,292.5 1269,290.5 1271,292.5 1273,290.5 1275,292.5 1277,290.5 1279,292.5 1281,290.5 1283,292.5 1285,290.5 1287,292.5 1289,290.5 1291,292.5 1293,290.5 1295,292.5 1297,290.5 1299,292.5 1301,290.5 1303,292.5 1305,290.5 1307,292.5 1309,290.5 1311,292.5 1313,290.5 1315,292.5 1317,290.5 1319,292.5 1321,290.5 1323,292.5 1325,290.5 1327,292.5 1329,290.5 1331,292.5 1333,290.5 1335,292.5 1337,290.5 1339,292.5 1341,290.5 1343,292.5 1345,290.5" fill="none" stroke="#f00" stroke-width="1" opacity=".45"/>
<rect x="1265" y="290" width="80" height="3" fill="url(#zz)"/>
<polyline points="897,362.5 899,364.5 901,362.5 903,364.5 905,362.5 907,364.5 909,362.5 911,364.5 913,362.5 915,364.5 917,362.5 919,364.5 921,362.5 923,364.5 925,362.5 927,364.5 929,362.5 931,364.5 933,362.5 935,364.5 937,362.5 939,364.5 941,362.5 943,364.5 945,362.5 947,364.5 949,362.5 951,364.5 953,362.5 955,364.5 957,362.5 959,364.5 961,362.5" fill="none" stroke="#f00" stroke-width="1" opacity=".45"/>
<rect x="897" y="362" width="64" height="3" fill="url(#zz)"/>
<polyline points="993,362.5 995,364.5 997,362.5 999,364.5 1001,362.5 1003,364.5 1005,362.5 1007,364.5 1009,362.5 1011,364.5 1013,362.5 1015,364.5 1017,362.5" fill="none" stroke="#f00" stroke-width="1" opacity=".45"/>
<rect x="993" y="362" width="24" height="3" fill="url(#zz)"/>
<polyline points="1025,362.5 1027,364.5 1029,362.5 1031,364.5 1033,362.5 1035,364.5 1037,362.5 1039,364.5 1041,362.5 1043,364.5 1045,362.5 1047,364.5 1049,362.5 1051,364.5 1053,362.5 1055,364.5 1057,362.5 1059,364.5 1061,362.5 1063,364.5 1065,362.5 1067,364.5 1069,362.5 1071,364.5 1073,362.5 1075,364.5 1077,362.5 1079,364.5 1081,362.5 1083,364.5 1085,362.5 1087,364.5 1089,362.5 1091,364.5 1093,362.5 1095,364.5 1097,362.5 1099,364.5 1101,362.5 1103,364.5 1105,362.5 1107,364.5 1109,362.5 1111,364.5 1113,362.5 1115,364.5 1117,362.5 1119,364.5 1121,362.5" fill="none" stroke="#f00" stroke-width="1" opacity=".45"/>
<rect x="1025" y="362" width="96" height="3" fill="url(#zz)"/>
<polyline points="1161,362.5 1163,364.5 1165,362.5 1167,364.5 1169,362.5 1171,364.5 1173,362.5 1175,364.5 1177,362.5 1179,364.5 1181,362.5 1183,364.5 1185,362.5 1187,364.5 1189,362.5 1191,364.5 1193,362.5 1195,364.5 1197,362.5 1199,364.5 1201,362.5 1203,364.5 1205,362.5 1207,364.5 1209,362.5 1211,364.5 1213,362.5 1215,364.5 1217,362.5 1219,364.5 1221,362.5 1223,364.5 1225,362.5 1227,364.5 1229,362.5 1231,364.5 1233,362.5" fill="none" stroke="#f00" stroke-width="1" opacity=".45"/>
<rect x="1161" y="362" width="72" height="3" fill="url(#zz)"/>
<polyline points="929,416.5 931,418.5 933,416.5 935,418.5 937,416.5 939,418.5 941,416.5 943,418.5 945,416.5 947,418.5 949,416.5 951,418.5 953,416.5 955,418.5 957,416.5 959,418.5 961,416.5 963,418.5 965,416.5 967,418.5 969,416.5 971,418.5 973,416.5 975,418.5 977,416.5 979,418.5 981,416.5 983,418.5 985,416.5 987,418.5 989,416.5 991,418.5 993,416.5 995,418.5 997,416.5 999,418.5 1001,416.5" fill="none" stroke="#f00" stroke-width="1" opacity=".45"/>
<rect x="929" y="416" width="72" height="3" fill="url(#zz)"/>
<polyline points="1049,416.5 1051,418.5 1053,416.5 1055,418.5 1057,416.5 1059,418.5 1061,416.5 1063,418.5 1065,416.5 1067,418.5 1069,416.5 1071,418.5 1073,416.5 1075,418.5 1077,416.5 1079,418.5 1081,416.5 1083,418.5 1085,416.5 1087,418.5 1089,416.5 1091,418.5 1093,416.5 1095,418.5 1097,416.5" fill="none" stroke="#f00" stroke-width="1" opacity=".45"/>
<rect x="1049" y="416" width="48" height="3" fill="url(#zz)"/>
<polyline points="1129,416.5 1131,418.5 1133,416.5 1135,418.5 1137,416.5 1139,418.5 1141,416.5 1143,418.5 1145,416.5 1147,418.5 1149,416.5 1151,418.5 1153,416.5 1155,418.5 1157,416.5 1159,418.5 1161,416.5 1163,418.5 1165,416.5 1167,418.5 1169,416.5" fill="none" stroke="#f00" stroke-width="1" opacity=".45"/>
<rect x="1129" y="416" width="40" height="3" fill="url(#zz)"/>
<polyline points="1177,416.5 1179,418.5 1181,416.5 1183,418.5 1185,416.5 1187,418.5 1189,416.5 1191,418.5 1193,416.5" fill="none" stroke="#f00" stroke-width="1" opacity=".45"/>
<rect x="1177" y="416" width="16" height="3" fill="url(#zz)"/>
<polyline points="1233,416.5 1235,418.5 1237,416.5 1239,418.5 1241,416.5 1243,418.5 1245,416.5 1247,418.5 1249,416.5 1251,418.5 1253,416.5 1255,418.5 1257,416.5 1259,418.5 1261,416.5 1263,418.5 1265,416.5 1267,418.5 1269,416.5 1271,418.5 1273,416.5 1275,418.5 1277,416.5 1279,418.5 1281,416.5 1283,418.5 1285,416.5 1287,418.5 1289,416.5 1291,418.5 1293,416.5 1295,418.5 1297,416.5" fill="none" stroke="#f00" stroke-width="1" opacity=".45"/>
<rect x="1233" y="416" width="64" height="3" fill="url(#zz)"/>
<polyline points="1265,506.5 1267,508.5 1269,506.5 1271,508.5 1273,506.5 1275,508.5 1277,506.5 1279,508.5 1281,506.5 1283,508.5 1285,506.5 1287,508.5 1289,506.5 1291,508.5 1293,506.5 1295,508.5 1297,506.5 1299,508.5 1301,506.5 1303,508.5 1305,506.5 1307,508.5 1309,506.5 1311,508.5 1313,506.5 1315,508.5 1317,506.5 1319,508.5 1321,506.5" fill="none" stroke="#f00" stroke-width="1" opacity=".45"/>
<rect x="1265" y="506" width="56" height="3" fill="url(#zz)"/>
<polyline points="1329,506.5 1331,508.5 1333,506.5 1335,508.5 1337,506.5 1339,508.5 1341,506.5 1343,508.5 1345,506.5 1347,508.5 1349,506.5 1351,508.5 1353,506.5 1355,508.5 1357,506.5 1359,508.5 1361,506.5 1363,508.5 1365,506.5 1367,508.5 1369,506.5 1371,508.5 1373,506.5 1375,508.5 1377,506.5 1379,508.5 1381,506.5 1383,508.5 1385,506.5" fill="none" stroke="#f00" stroke-width="1" opacity=".45"/>
<rect x="1329" y="506" width="56" height="3" fill="url(#zz)"/>
<polyline points="1289,524.5 1291,526.5 1293,524.5 1295,526.5 1297,524.5 1299,526.5 1301,524.5 1303,526.5 1305,524.5 1307,526.5 1309,524.5 1311,526.5 1313,524.5 1315,526.5 1317,524.5 1319,526.5 1321,524.5 1323,526.5 1325,524.5 1327,526.5 1329,524.5" fill="none" stroke="#f00" stroke-width="1" opacity=".45"/>
<rect x="1289" y="524" width="40" height="3" fill="url(#zz)"/>
<polyline points="1337,524.5 1339,526.5 1341,524.5 1343,526.5 1345,524.5 1347,526.5 1349,524.5 1351,526.5 1353,524.5" fill="none" stroke="#f00" stroke-width="1" opacity=".45"/>
<rect x="1337" y="524" width="16" height="3" fill="url(#zz)"/>
<polyline points="873,668.5 875,670.5 877,668.5 879,670.5 881,668.5 883,670.5 885,668.5 887,670.5 889,668.5 891,670.5 893,668.5 895,670.5 897,668.5 899,670.5 901,668.5 903,670.5 905,668.5 907,670.5 909,668.5 911,670.5 913,668.5 915,670.5 917,668.5 919,670.5 921,668.5" fill="none" stroke="#f00" stroke-width="1" opacity=".45"/>
<rect x="873" y="668" width="48" height="3" fill="url(#zz)"/>
<polyline points="953,668.5 955,670.5 957,668.5 959,670.5 961,668.5 963,670.5 965,668.5 967,670.5 969,668.5 971,670.5 973,668.5 975,670.5 977,668.5 979,670.5 981,668.5 983,670.5 985,668.5 987,670.5 989,668.5 991,670.5 993,668.5 995,670.5 997,668.5 999,670.5 1001,668.5" fill="none" stroke="#f00" stroke-width="1" opacity=".45"/>
<rect x="953" y="668" width="48" height="3" fill="url(#zz)"/>
<polyline points="865,686.5 867,688.5 869,686.5 871,688.5 873,686.5 875,688.5 877,686.5 879,688.5 881,686.5 883,688.5 885,686.5 887,688.5 889,686.5 891,688.5 893,686.5 895,688.5 897,686.5 899,688.5 901,686.5 903,688.5 905,686.5 907,688.5 909,686.5 911,688.5 913,686.5 915,688.5 917,686.5 919,688.5 921,686.5" fill="none" stroke="#f00" stroke-width="1" opacity=".45"/>
<rect x="865" y="686" width="56" height="3" fill="url(#zz)"/>
<polyline points="929,740.5 931,742.5 933,740.5 935,742.5 937,740.5 939,742.5 941,740.5 943,742.5 945,740.5 947,742.5 949,740.5 951,742.5 953,740.5 955,742.5 957,740.5 959,742.5 961,740.5 963,742.5 965,740.5 967,742.5 969,740.5 971,742.5 973,740.5 975,742.5 977,740.5 979,742.5 981,740.5 983,742.5 985,740.5" fill="none" stroke="#f00" stroke-width="1" opacity=".45"/>
<rect x="929" y="740" width="56" height="3" fill="url(#zz)"/>
<polyline points="881,758.5 883,760.5 885,758.5 887,760.5 889,758.5 891,760.5 893,758.5 895,760.5 897,758.5 899,760.5 901,758.5 903,760.5 905,758.5 907,760.5 909,758.5 911,760.5 913,758.5 915,760.5 917,758.5 919,760.5 921,758.5" fill="none" stroke="#f00" stroke-width="1" opacity=".45"/>
<rect x="881" y="758" width="40" height="3" fill="url(#zz)"/>
<polyline points="1057,758.5 1059,760.5 1061,758.5 1063,760.5 1065,758.5 1067,760.5 1069,758.5 1071,760.5 1073,758.5 1075,760.5 1077,758.5 1079,760.5 1081,758.5 1083,760.5 1085,758.5 1087,760.5 1089,758.5 1091,760.5 1093,758.5 1095,760.5 1097,758.5 1099,760.5 1101,758.5 1103,760.5 1105,758.5 1107,760.5 1109,758.5 1111,760.5 1113,758.5" fill="none" stroke="#f00" stroke-width="1" opacity=".45"/>
<rect x="1057" y="758" width="56" height="3" fill="url(#zz)"/>
<polyline points="929,794.5 931,796.5 933,794.5 935,796.5 937,794.5 939,796.5 941,794.5 943,796.5 945,794.5 947,796.5 949,794.5 951,796.5 953,794.5 955,796.5 957,794.5 959,796.5 961,794.5 963,796.5 965,794.5 967,796.5 969,794.5 971,796.5 973,794.5 975,796.5 977,794.5 979,796.5 981,794.5 983,796.5 985,794.5 987,796.5 989,794.5 991,796.5 993,794.5 995,796.5 997,794.5 999,796.5 1001,794.5 1003,796.5 1005,794.5 1007,796.5 1009,794.5" fill="none" stroke="#f00" stroke-width="1" opacity=".45"/>
<rect x="929" y="794" width="80" height="3" fill="url(#zz)"/>
<polyline points="881,812.5 883,814.5 885,812.5 887,814.5 889,812.5 891,814.5 893,812.5 895,814.5 897,812.5 899,814.5 901,812.5 903,814.5 905,812.5 907,814.5 909,812.5 911,814.5 913,812.5 915,814.5 917,812.5 919,814.5 921,812.5" fill="none" stroke="#f00" stroke-width="1" opacity=".45"/>
<rect x="881" y="812" width="40" height="3" fill="url(#zz)"/>
<polyline points="1097,812.5 1099,814.5 1101,812.5 1103,814.5 1105,812.5 1107,814.5 1109,812.5 1111,814.5 1113,812.5 1115,814.5 1117,812.5 1119,814.5 1121,812.5 1123,814.5 1125,812.5 1127,814.5 1129,812.5 1131,814.5 1133,812.5 1135,814.5 1137,812.5 1139,814.5 1141,812.5 1143,814.5 1145,812.5 1147,814.5 1149,812.5 1151,814.5 1153,812.5 1155,814.5 1157,812.5 1159,814.5 1161,812.5 1163,814.5 1165,812.5 1167,814.5 1169,812.5 1171,814.5 1173,812.5 1175,814.5 1177,812.5" fill="none" stroke="#f00" stroke-width="1" opacity=".45"/>
<rect x="1097" y="812" width="80" height="3" fill="url(#zz)"/>
 </svg>
</div>
<div class="ab" style="left:0;top:0;width:0;height:0">
<div class="lno" style="top:98px">1</div>
<div class="lno" style="top:116px">2</div>
<div class="lno" style="top:134px">3</div>
<div class="lno" style="top:152px">4</div>
<div class="lno" style="top:170px">5</div>
<div class="lno" style="top:188px">6</div>
<div class="lno" style="top:206px">7</div>
<div class="lno" style="top:224px">8</div>
<div class="lno" style="top:242px">9</div>
<div class="lno" style="top:260px">10</div>
<div class="lno" style="top:278px">11</div>
<div class="lno" style="top:296px">12</div>
<div class="lno" style="top:314px">13</div>
<div class="lno" style="top:332px">14</div>
<div class="lno" style="top:350px">15</div>
<div class="lno" style="top:368px">16</div>
<div class="lno" style="top:386px">17</div>
<div class="lno" style="top:404px">18</div>
<div class="lno" style="top:422px">19</div>
<div class="lno" style="top:440px">20</div>
<div class="lno" style="top:458px">21</div>
<div class="lno" style="top:476px">22</div>
<div class="lno" style="top:494px">23</div>
<div class="lno" style="top:512px">24</div>
<div class="lno" style="top:530px">25</div>
<div class="lno" style="top:548px">26</div>
<div class="lno" style="top:566px">27</div>
<div class="lno" style="top:584px">28</div>
<div class="lno" style="top:602px">29</div>
<div class="lno" style="top:620px">30</div>
<div class="lno" style="top:638px">31</div>
<div class="lno" style="top:656px">32</div>
<div class="lno" style="top:674px">33</div>
<div class="lno" style="top:692px">34</div>
<div class="lno" style="top:710px">35</div>
<div class="lno" style="top:728px">36</div>
<div class="lno" style="top:746px">37</div>
<div class="lno" style="top:764px">38</div>
<div class="lno" style="top:782px">39</div>
<div class="lno" style="top:800px">40</div>
</div>
<!-- scrollbars -->
<svg class="ab" style="left:712px;top:96px" width="719" height="740" viewBox="712 96 719 740">
 <rect x="1410" y="97" width="16" height="721" fill="#f0f0f0"/>
 <rect x="1410" y="114" width="15" height="610" fill="#cdcdcd"/>
 <path d="M1414.5,107.5 l3.5,-3.5 l3.5,3.5" fill="none" stroke="#606060" stroke-width="1.6"/>
 <path d="M1414.5,806.5 l3.5,3.5 l3.5,-3.5" fill="none" stroke="#606060" stroke-width="1.6"/>
 <rect x="716" y="817" width="710" height="17" fill="#f0f0f0"/><rect x="716" y="834" width="712" height="2" fill="#fff"/><rect x="1426" y="96" width="3" height="740" fill="#fff"/>
 <rect x="733" y="818" width="517" height="15" fill="#cdcdcd"/>
 <path d="M727,822 l-3.5,3.5 l3.5,3.5" fill="none" stroke="#606060" stroke-width="1.6"/>
 <path d="M1399.5,822 l3.5,3.5 l-3.5,3.5" fill="none" stroke="#606060" stroke-width="1.6"/>
</svg>
<!-- status -->
<div class="ab" style="left:712px;top:838px;width:718px;height:20px;background:#f0f0f0"></div>
<div class="ab" style="left:889px;top:840px;width:1px;height:18px;background:#d7d7d7"></div>
<div class="ab" style="left:1149px;top:840px;width:1px;height:18px;background:#d7d7d7"></div>
<div class="ab" style="left:1259px;top:840px;width:1px;height:18px;background:#d7d7d7"></div>
<div class="ab" style="left:1379px;top:840px;width:1px;height:18px;background:#d7d7d7"></div>
<div class="ab" style="left:1409px;top:840px;width:1px;height:18px;background:#d7d7d7"></div>
<svg class="ab" style="left:1418px;top:846px" width="12" height="12" viewBox="1418 846 12 12"><g fill="#a8a8a8"><rect x="1426" y="849" width="2" height="2"/><rect x="1423" y="852" width="2" height="2"/><rect x="1426" y="852" width="2" height="2"/><rect x="1420" y="855" width="2" height="2"/><rect x="1423" y="855" width="2" height="2"/><rect x="1426" y="855" width="2" height="2"/></g></svg>
<div class="sb" style="left:715px">length : 1231</div>
<div class="sb" style="left:794px">lines : 45</div>
<div class="sb" style="left:894px">Ln : 22</div>
<div class="sb" style="left:940px">Col : 17</div>
<div class="sb" style="left:991px">Sel : 0 | 0</div>
<div class="sb" style="left:1154px">Dos\Windows</div>
<div class="sb" style="left:1264px">UTF-8 w/o BOM</div>
<div class="sb" style="left:1384px">INS</div>
<div class="ab" style="left:1430px;top:0;width:1px;height:858px;background:linear-gradient(to bottom,#236a6a 0,#236a6a 180px,#6a8c60 380px,#7a9a66 600px,#3a7a5a 858px)"></div>

</body></html>
